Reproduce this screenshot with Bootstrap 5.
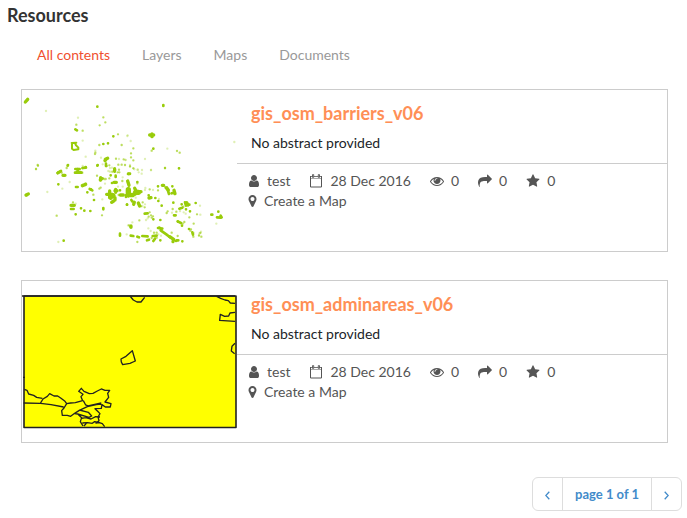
<!DOCTYPE html>
<html lang="en">
<head>
<meta charset="utf-8">
<meta name="viewport" content="width=device-width, initial-scale=1">
<title>Resources</title>
<link href="https://cdn.jsdelivr.net/npm/bootstrap@5.3.0/dist/css/bootstrap.min.css" rel="stylesheet">
<style>
body { font-family: Lato, "Liberation Sans", sans-serif; font-size: 14px; line-height: 20px; color: #333; padding: 3px 19px 0 21px; }
h1 { font-size: 18px; line-height: 24px; font-weight: 700; margin: 0 0 0 -14px; }
.filters { padding-top: 8px; margin-bottom: 14px; }
.filters .nav-link { font-size: 14px; line-height: 20px; padding: 10px 16px; color: #999; }
.filters .nav-link.active { color: #f0502f; }
.resource { border: 1px solid #ccc; margin-bottom: 28px; }
.thumb { width: 215px; height: 161px; flex: none; display: block; }
.resource h2 { font-size: 18px; line-height: 24px; font-weight: 700; margin: 0 0 8px; }
.resource h2 a { color: #ff8f56; text-decoration: none; }
.summary { padding: 11px 14px 10px; border-bottom: 1px solid #ccc; }
.facts { padding: 7px 11px; color: #555; }
.facts ul { column-gap: 19px; }
.facts a { color: inherit; text-decoration: none; }
.ico { width: 14px; height: 14px; fill: currentColor; flex: none; margin-right: 7px; }
.ico-slim { width: 12px; }
.ico-pin { width: 9px; }
.pages { padding-top: 6px; margin-right: -14px; }
.pages .page-link { font-size: 13px; line-height: 20px; padding: 6px 12px; color: #428bca; border-color: #ddd; font-weight: 700; }
.pages .page-link svg { width: 5px; height: 9px; fill: none; stroke: currentColor; stroke-width: 1.3; }
.dots path { fill: none; stroke: #99cc0a; stroke-linecap: round; stroke-linejoin: round; }
.dots .l { stroke-width: 10; } .dots .m { stroke-width: 8; } .dots .s { stroke-width: 7; opacity: .65; } .dots .f { stroke-width: 7; opacity: .3; } .dots .xl { stroke-width: 16; }
.dots .ring { stroke-width: 6; }
.region { fill: #ff0; stroke: #222; stroke-width: 1.6; stroke-linejoin: round; }
</style>
</head>
<body>
<svg class="d-none" aria-hidden="true">
<symbol id="i-user" viewBox="192 0 1408 1792"><path d="M1536 1399q0 109-62.500 187t-150.500 78h-854q-88 0-150.500-78t-62.500-187q0-85 8.500-160.500t31.500-152 58.500-131 94-89 134.500-34.500q131 128 313 128t313-128q76 0 134.500 34.500t94 89 58.500 131 31.500 152 8.500 160.500zm-256-887q0 159-112.500 271.500t-271.500 112.500-271.500-112.500-112.500-271.500 112.500-271.500 271.500-112.500 271.500 112.500 112.500 271.500z"/></symbol>
<symbol id="i-date" viewBox="0 0 14 14"><path fill="none" stroke="currentColor" d="M1.500 2.500h11v10.500h-11z"/><path d="M1 2h12v2.500H1z"/><path fill="#fff" d="M2 2.800h10v1.200H2z"/><path fill="#fff" stroke="currentColor" stroke-width=".9" d="M3.500.6h1.200v2.800H3.500zM9.300.6h1.200v2.800H9.300z"/></symbol>
<symbol id="i-eye" viewBox="0 0 1792 1792"><path d="M1664 960q-152-236-381-353 61 104 61 225 0 185-131.500 316.500t-316.500 131.500-316.500-131.500-131.500-316.500q0-121 61-225-229 117-381 353 133 205 333.500 326.500t434.500 121.500 434.500-121.500 333.500-326.500zm-720-384q0-20-14-34t-34-14q-125 0-214.500 89.500t-89.500 214.500q0 20 14 34t34 14 34-14 14-34q0-86 61-147t147-61q20 0 34-14t14-34zm848 384q0 34-20 69-140 230-376.500 368.500t-499.500 138.500-499.500-139-376.500-368q-20-35-20-69t20-69q140-229 376.500-368t499.500-139 499.500 139 376.500 368q20 35 20 69z"/></symbol>
<symbol id="i-share" viewBox="0 0 1792 1792"><path d="M1792 640q0 26-19 45l-512 512q-19 19-45 19t-45-19-19-45v-256h-224q-98 0-175.500 6t-154 21.500-133 42.500-105.500 69.500-80 101-48.500 138.500-17.500 181q0 55 5 123 0 6 2.500 23.500t2.500 26.500q0 15-8.500 25t-23.500 10q-16 0-28-17-7-9-13-22t-13.500-30-10.500-24q-127-285-127-451 0-199 53-333 162-403 875-403h224v-256q0-26 19-45t45-19 45 19l512 512q19 19 19 45z"/></symbol>
<symbol id="i-star" viewBox="0 0 1664 1792"><path d="M1664 647q0 22-26 48l-363 354 86 500q1 7 1 20 0 21-10.500 35.500t-30.500 14.500q-19 0-40-12l-449-236-449 236q-22 12-40 12-21 0-31.500-14.500t-10.500-35.500q0-6 2-20l86-500-364-354q-25-27-25-48 0-37 56-46l502-73 225-455q19-41 49-41t49 41l225 455 502 73q56 9 56 46z"/></symbol>
<symbol id="i-pin" viewBox="320 0 1152 1792"><path d="M1152 640q0-106-75-181t-181-75-181 75-75 181 75 181 181 75 181-75 75-181zm256 0q0 109-33 179l-364 774q-16 33-47.500 52t-67.500 19-67.500-19-46.500-52l-365-774q-33-70-33-179 0-212 150-362t362-150 362 150 150 362z"/></symbol>
</svg>

<h1>Resources</h1>
<nav class="nav filters" aria-label="Content type">
  <a class="nav-link active" aria-current="page" href="#">All contents</a>
  <a class="nav-link" href="#">Layers</a>
  <a class="nav-link" href="#">Maps</a>
  <a class="nav-link" href="#">Documents</a>
</nav>

<main>
<article class="resource d-flex">
  <svg class="thumb dots" viewBox="0 0 215 161" role="img" aria-label="Map of barriers">
    <g transform="translate(-7 -5) scale(.3333)">
      <path class="l" d="M31 51L38 43M274 222L270 227M271 223L278 220"/>
      <path class="ring" d="M170 174L184 173M171 175V191L176 195 190 193 190 188 183 181 180 174"/>
      <path class="m" d="M181 133L186 136M188 252V262M180 263H200M128 264L138 258M299 251V260M273 236V243"/>
      <path class="m" d="M247 65h.1M159 240h.1M279 175h.1M265 177h.1M295 154h.1M248 240h.1M203 249h.1M212 246h.1"/>
      <path class="s" d="M265 97h.1M271 112h.1M254 121h.1M309 148h.1M253 180h.1M320 180h.1M203 137h.1M184 119h.1M68 240h.1M63 252h.1M241 203h.1M240 207h.1M303 221h.1M326 223h.1M310 239h.1M320 239h.1M155 249h.1M330 240h.1M313 262h.1M283 241h.1"/>
      <path class="f" d="M93 78h.1M189 98h.1M203 167h.1M212 215h.1M241 197h.1M337 153h.1M258 218h.1M312 222h.1M285 260h.1M263 238h.1M331 225h.1"/>
    </g>
    <g transform="translate(103 -5) scale(.3333)">
      <path class="l" d="M74 150H86M81 147V155"/>
      <path class="m" d="M115 60V63M85 191h.1M162 250h.1M10 266H15"/>
      <path class="s" d="M25 190h.1M18 205h.1M18 217h.1M25 226h.1M80 197h.1M156 198h.1M164 203h.1M120 249h.1M25 250h.1M15 244h.1"/>
      <path class="f" d="M8 151h.1M17 168h.1M127 191h.1M328 171h.1M60 222h.1M2 225h.1M78 255h.1M38 254h.1M41 262h.1M50 266h.1M15 240h.1M28 253h.1"/>
    </g>
    <g transform="translate(-7 75) scale(.3333)">
      <path class="l" d="M33 90L40 87M144 31L150 31M186 22H196M202 62L212 58M257 38L257 45M275 88H293M284 78V98M287 100L297 91M300 77H306M302 73V82M316 90H325M297 52H304M340 72V92M299 12V17M168 121H178M300 98V105M290 112L296 108"/>
      <path class="m" d="M128 24L135 20M181 12H194M203 9L213 8M183 66H188M302 32V36M168 132H176M315 206V212M265 129V133M224 72L232 76M255 45L263 40M333 91V96"/>
      <path class="m" d="M228 73h.1M217 82h.1M237 105h.1M198 130h.1M226 138h.1M208 137h.1M182 148h.1M35 91h.1M146 227h.1M158 2h.1M274 3h.1M287 31h.1M291 54h.1M315 76h.1M341 27h.1M336 119h.1M130 58h.1M247 2h.1"/>
      <path class="s" d="M125 152h.1M261 151h.1M268 42h.1M246 32h.1M257 68h.1M322 48h.1M338 50h.1M235 89h.1M211 56h.1M292 20h.1M308 22h.1M283 40h.1M272 42h.1M140 23h.1M174 112h.1M129 22h.1M69 2h.1M253 71h.1M312 14h.1M311 90h.1M338 48h.1"/>
      <path class="f" d="M63 12h.1M97 81h.1M142 71h.1M130 231h.1M339 181h.1M335 208h.1M182 116h.1M164 51h.1M203 23h.1M285 9h.1M262 103h.1M291 8h.1M323 37h.1M270 56h.1M203 3h.1M309 65h.1M323 65h.1M280 18h.1"/>
    </g>
    <g transform="translate(103 75) scale(.3333)">
      <path class="xl" d="M10 74V88M32 82H40"/>
      <path class="l" d="M8 48L12 61M10 74V93M20 88H30M5 92H24M29 70L37 85M44 80H48M72 99L78 98M123 68L130 75M147 76L150 86M112 61H116M40 114L44 123M28 112L26 118M185 113L189 120M134 215L146 223 144 230M18 183V187"/>
      <path class="m" d="M9 27H14M19 105L22 109M59 146L68 145M17 212L25 213M37 215L42 217M52 213L68 214M66 226L72 224M83 213L95 212M85 228L90 221M99 189L112 191M107 196L125 209 135 217M126 68L132 87M140 85L147 83M155 226H160M180 112L183 122M259 149h3M287 152L290 157M276 157L288 158M147 151H152M158 169L168 174M163 131L172 128M204 209L202 202"/>
      <path class="m" d="M6 119h.1M37 51h.1M99 64h.1M142 64h.1M91 99h.1M100 108h.1M110 122h.1M145 113h.1M212 114h.1M193 119h.1M195 139h.1M280 140h.1M106 165h.1M159 170h.1M171 182h.1M172 229h.1M106 226h.1M103 188h.1M85 163h.1M192 192h.1M17 185h.1M71 91h.1M170 118h.1M183 133h.1M153 228h.1"/>
      <path class="s" d="M120 9h.1M162 10h.1M37 55h.1M99 76h.1M53 112h.1M59 127h.1M48 124h.1M74 73h.1M128 139h.1M125 144h.1M143 132h.1M154 140h.1M74 142h.1M71 155h.1M78 151h.1M80 158h.1M84 154h.1M193 157h.1M175 125h.1M206 176h.1M216 148h.1M178 171h.1M173 176h.1M43 166h.1M12 181h.1M95 203h.1M140 203h.1M158 213h.1M196 197h.1M226 204h.1M222 211h.1M229 215h.1M37 231h.1M87 203h.1M95 218h.1M80 219h.1M205 215h.1M198 193h.1"/>
      <path class="f" d="M78 15h.1M51 15h.1M15 5h.1M25 10h.1M38 14h.1M84 75h.1M61 69h.1M52 123h.1M60 118h.1M225 122h.1M226 149h.1M182 146h.1M274 176h.1M70 190h.1M77 198h.1M100 208h.1M108 212h.1M223 205h.1M228 200h.1M206 204h.1M68 160h.1M63 165h.1M141 143h.1M60 75h.1M32 98h.1M222 212h.1M176 142h.1M165 138h.1M22 172h.1M102 102h.1"/>
    </g>
  </svg>
  <div class="flex-grow-1">
    <div class="summary">
      <h2><a href="#">gis_osm_barriers_v06</a></h2>
      <div class="text-dark">No abstract provided</div>
    </div>
    <div class="facts">
      <ul class="list-unstyled d-flex flex-wrap m-0">
        <li class="d-flex align-items-center"><svg class="ico ico-slim"><use href="#i-user"/></svg><a href="#">test</a></li>
        <li class="d-flex align-items-center"><svg class="ico"><use href="#i-date"/></svg>28 Dec 2016</li>
        <li class="d-flex align-items-center"><svg class="ico"><use href="#i-eye"/></svg>0</li>
        <li class="d-flex align-items-center"><svg class="ico"><use href="#i-share"/></svg>0</li>
        <li class="d-flex align-items-center"><svg class="ico"><use href="#i-star"/></svg>0</li>
      </ul>
      <a class="d-flex align-items-center" href="#"><svg class="ico ico-pin"><use href="#i-pin"/></svg>Create a Map</a>
    </div>
  </div>
</article>

<article class="resource d-flex">
  <svg class="thumb" viewBox="0 0 215 161" role="img" aria-label="Map of administrative areas">
    <rect class="region" x="2" y="15" width="212" height="131.500"/>
    <g transform="translate(-7 -1) scale(.3333)" fill="none" stroke="#222" stroke-width="4" stroke-linejoin="round">
      <path d="M318 237L333 229 352 212 361 243 345 250 323 254 319 246zM345 48L355 60 366 66 378 66 389 52"/>
      <path d="M605 49L617 55 630 60 640 62 646 69 660 70M660 97L645 99 641 108 629 109 616 103 614 121 660 124M660 190L651 199 649 213 659 221M21 48H660" />
      <path d="M28 328L36 331 41 342 56 346 65 352 82 355M26 369L77 370 108 374 146 381M76 370L84 357 97 349 104 341 117 348 128 348 137 354 150 364 155 371 147 384 140 392 142 406 157 406 167 409 179 400 193 391 217 380 244 374 259 372M155 371L167 369 181 368 203 362 198 350 204 343 191 334 199 325 207 334 223 341 234 340 247 333 259 327 270 331 284 331 278 340 281 352 270 366 288 371 286 381 271 381 261 374 259 385 240 386 248 394 255 401 249 411 252 422 243 429 253 428 262 431 269 440M205 362L212 375 219 378 259 369M193 390L220 397 230 408 222 412 188 402 179 401M188 402L200 413 196 425 204 438M200 415L212 413 228 417 242 410 255 411M202 429L217 428 232 430 239 425 252 427M207 438L214 430M24 292H30"/>
    </g>
  </svg>
  <div class="flex-grow-1">
    <div class="summary">
      <h2><a href="#">gis_osm_adminareas_v06</a></h2>
      <div class="text-dark">No abstract provided</div>
    </div>
    <div class="facts">
      <ul class="list-unstyled d-flex flex-wrap m-0">
        <li class="d-flex align-items-center"><svg class="ico ico-slim"><use href="#i-user"/></svg><a href="#">test</a></li>
        <li class="d-flex align-items-center"><svg class="ico"><use href="#i-date"/></svg>28 Dec 2016</li>
        <li class="d-flex align-items-center"><svg class="ico"><use href="#i-eye"/></svg>0</li>
        <li class="d-flex align-items-center"><svg class="ico"><use href="#i-share"/></svg>0</li>
        <li class="d-flex align-items-center"><svg class="ico"><use href="#i-star"/></svg>0</li>
      </ul>
      <a class="d-flex align-items-center" href="#"><svg class="ico ico-pin"><use href="#i-pin"/></svg>Create a Map</a>
    </div>
  </div>
</article>
</main>

<nav class="pages" aria-label="Pages">
  <ul class="pagination justify-content-end mb-0">
    <li class="page-item"><a class="page-link" href="#" aria-label="Previous"><svg viewBox="0 0 5 9"><path d="M4.300 .8L.8 4.500l3.500 3.700"/></svg></a></li>
    <li class="page-item"><a class="page-link" href="#">page 1 of 1</a></li>
    <li class="page-item"><a class="page-link" href="#" aria-label="Next"><svg viewBox="0 0 5 9"><path d="M.7 .8l3.500 3.700L.7 8.200"/></svg></a></li>
  </ul>
</nav>
<script src="https://cdn.jsdelivr.net/npm/bootstrap@5.3.0/dist/js/bootstrap.bundle.min.js"></script>
</body>
</html>
